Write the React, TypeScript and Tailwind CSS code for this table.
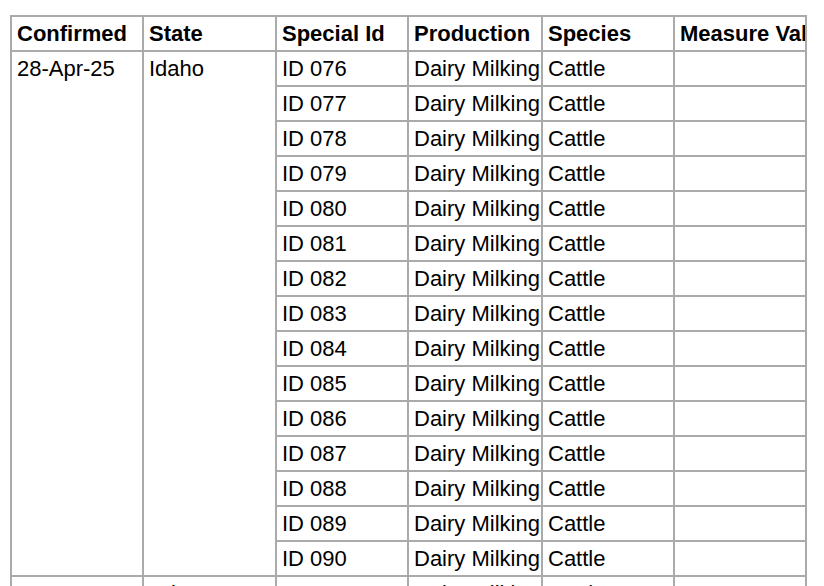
import React from 'react';

const headers = ['Confirmed', 'State', 'Special Id', 'Production', 'Species', 'Measure Value'];
const widths = ['w-[132px]', 'w-[133px]', 'w-[132px]', 'w-[134px]', 'w-[132px]', 'w-[132px]'];

const groups = [
  {
    confirmed: '28-Apr-25',
    state: 'Idaho',
    ids: Array.from({ length: 15 }, (_, i) => `ID ${String(76 + i).padStart(3, '0')}`),
  },
  {
    confirmed: '28-Apr-25',
    state: 'Arizona',
    ids: ['AZ 003', 'AZ 004', 'AZ 005'],
  },
];

const cell =
  'border-2 border-[#aaaaaa] px-[5px] py-[4px] leading-[25px] overflow-hidden whitespace-nowrap text-left align-top';

export default function App() {
  return (
    <div className="bg-white min-h-screen pt-[15px] pl-[10px] text-black text-[22px] font-['Liberation_Sans',Arial,sans-serif]">
      <table className="table-fixed border-collapse w-[797px]">
        <colgroup>
          {widths.map((w, i) => (
            <col key={i} className={w} />
          ))}
        </colgroup>
        <thead>
          <tr>
            {headers.map((h) => (
              <th key={h} className={`${cell} font-bold`}>
                {h}
              </th>
            ))}
          </tr>
        </thead>
        <tbody>
          {groups.map((g, gi) =>
            g.ids.map((id, i) => (
              <tr key={`${gi}-${id}`}>
                {i === 0 && (
                  <>
                    <td rowSpan={g.ids.length} className={cell}>
                      {g.confirmed}
                    </td>
                    <td rowSpan={g.ids.length} className={cell}>
                      {g.state}
                    </td>
                  </>
                )}
                <td className={cell}>{id}</td>
                <td className={cell}>Dairy Milking</td>
                <td className={cell}>Cattle</td>
                <td className={cell}></td>
              </tr>
            ))
          )}
        </tbody>
      </table>
    </div>
  );
}
